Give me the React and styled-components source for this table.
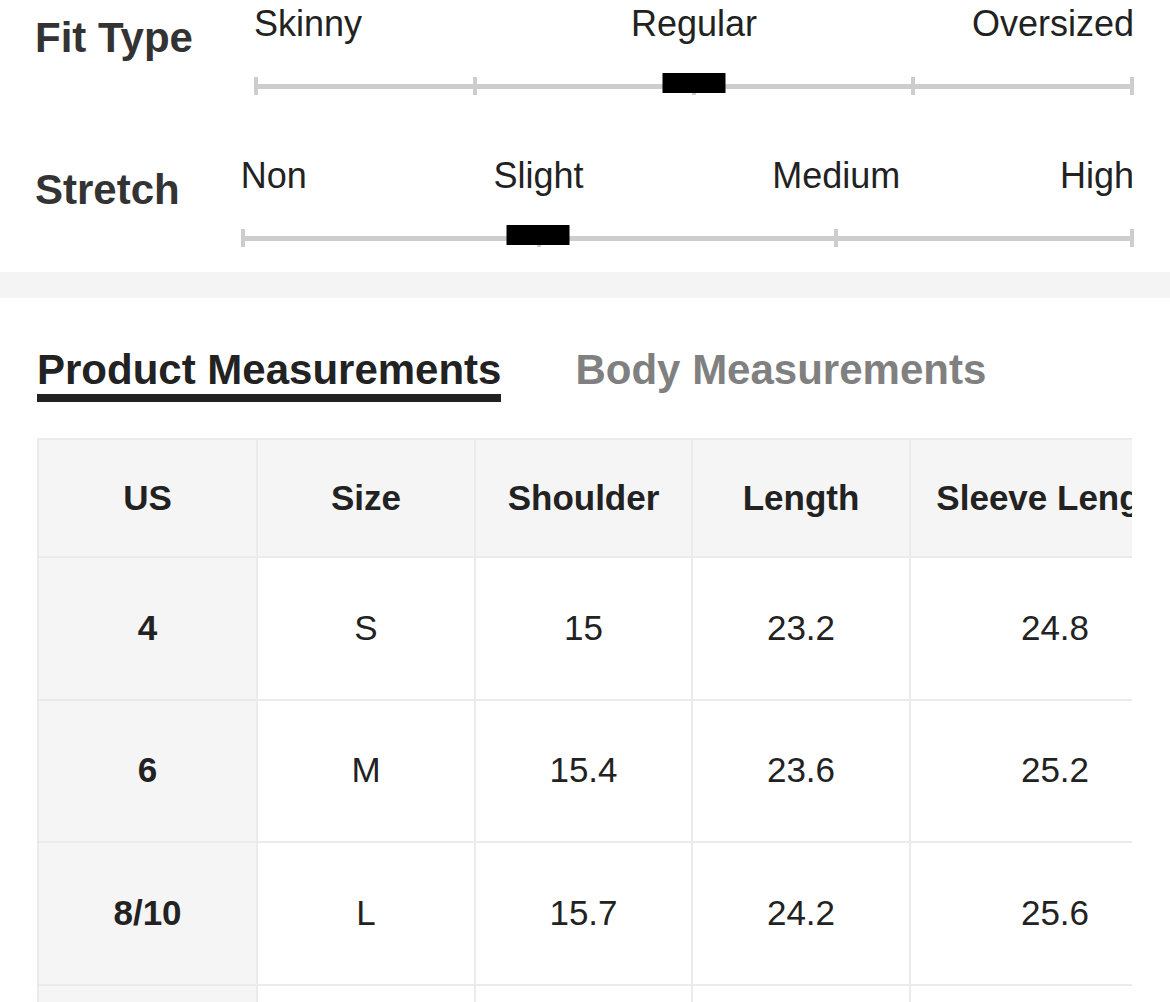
import React from 'react'
import styled, { createGlobalStyle } from 'styled-components'

const fitLabels = ['Skinny', 'Regular', 'Oversized']
const stretchLabels = ['Non', 'Slight', 'Medium', 'High']

const rows = [
  { us: '4', size: 'S', shoulder: '15', length: '23.2', sleeve: '24.8' },
  { us: '6', size: 'M', shoulder: '15.4', length: '23.6', sleeve: '25.2' },
  { us: '8/10', size: 'L', shoulder: '15.7', length: '24.2', sleeve: '25.6' },
  { us: '12', size: 'XL', shoulder: '16.1', length: '24.8', sleeve: '26' },
]

const GlobalStyle = createGlobalStyle`
  * { box-sizing: border-box; }
  body {
    margin: 0;
    background: #fff;
    font-family: "Liberation Sans", Arial, sans-serif;
    color: #222;
  }
`

const Scale = ({ labels, stops, value }) => {
  const cols = (labels.length - 1) * 2
  return (
    <ScaleBox>
      <Labels $cols={cols}>
        {labels.map((l, i) => (
          <Label key={l} $i={i} $last={i === labels.length - 1} $cols={cols}>
            {l}
          </Label>
        ))}
      </Labels>
      <Track>
        {Array.from({ length: stops }).map((_, i) => (
          <Tick key={i} />
        ))}
        <Thumb style={{ left: `${(value / (stops - 1)) * 100}%` }} />
      </Track>
    </ScaleBox>
  )
}

const App = () => {
  return (
    <>
      <GlobalStyle />
      <Fit>
        <Row>
          <RowLabel>Fit Type</RowLabel>
          <Scale labels={fitLabels} stops={5} value={2} />
        </Row>
        <Row>
          <RowLabel>Stretch</RowLabel>
          <Scale labels={stretchLabels} stops={4} value={1} />
        </Row>
      </Fit>
      <Band />
      <Measure>
        <Tabs>
          <Tab $active>Product Measurements</Tab>
          <Tab>Body Measurements</Tab>
        </Tabs>
        <TableWrap>
          <Table>
            <colgroup>
              <col style={{ width: 219 }} />
              <col style={{ width: 218 }} />
              <col style={{ width: 217 }} />
              <col style={{ width: 218 }} />
              <col style={{ width: 290 }} />
            </colgroup>
            <thead>
              <tr>
                <Th>US</Th>
                <Th>Size</Th>
                <Th>Shoulder</Th>
                <Th>Length</Th>
                <Th>Sleeve Length</Th>
              </tr>
            </thead>
            <tbody>
              {rows.map((r) => (
                <tr key={r.us}>
                  <Td $head>{r.us}</Td>
                  <Td>{r.size}</Td>
                  <Td>{r.shoulder}</Td>
                  <Td>{r.length}</Td>
                  <Td>{r.sleeve}</Td>
                </tr>
              ))}
            </tbody>
          </Table>
        </TableWrap>
      </Measure>
    </>
  )
}

const Fit = styled.section`
  padding: 3px 36px 25px 35px;
  display: flex;
  flex-direction: column;
  gap: 60px;
`

const Row = styled.div`
  display: flex;
  align-items: flex-start;
  gap: 61px;
`

const RowLabel = styled.h3`
  margin: 11px 0 0;
  font-size: 42px;
  line-height: 48px;
  font-weight: 700;
  color: #333;
  white-space: nowrap;
`

const ScaleBox = styled.div`
  flex: 1;
  min-width: 0;
`

const Labels = styled.div`
  display: grid;
  grid-template-columns: repeat(${(p) => p.$cols}, minmax(0, 1fr));
  font-size: 36px;
  line-height: 41px;
  color: #222;
  margin-bottom: 33px;
`

const Label = styled.span`
  white-space: nowrap;
  grid-row: 1;
  grid-column: ${(p) =>
    p.$i === 0 ? '1 / span 1' : p.$last ? `${p.$cols} / span 1` : `${p.$i * 2} / span 2`};
  justify-self: ${(p) => (p.$i === 0 ? 'start' : p.$last ? 'end' : 'center')};
`

const Track = styled.div`
  position: relative;
  height: 18px;
  display: flex;
  justify-content: space-between;
  background: linear-gradient(#cdcdcd, #cdcdcd) center / 100% 5px no-repeat;
`

const Tick = styled.span`
  width: 4px;
  height: 18px;
  background: #cdcdcd;
`

const Thumb = styled.span`
  position: absolute;
  top: -4px;
  width: 63px;
  height: 20px;
  background: #000;
  transform: translateX(-50%);
`

const Band = styled.div`
  height: 26px;
  background: #f4f4f4;
`

const Measure = styled.section`
  padding: 48px 38px 0 37px;
`

const Tabs = styled.div`
  display: flex;
  gap: 74px;
  margin-bottom: 36px;
`

const Tab = styled.div`
  font-size: 42px;
  line-height: 48px;
  font-weight: 700;
  white-space: nowrap;
  color: ${(p) => (p.$active ? '#222' : '#808080')};
  border-bottom: 8px solid ${(p) => (p.$active ? '#222' : 'transparent')};
`

const TableWrap = styled.div`
  overflow: hidden;
`

const Table = styled.table`
  table-layout: fixed;
  width: 1162px;
  border-collapse: collapse;
  font-size: 35px;
  color: #222;
`

const Th = styled.th`
  background: #f5f5f5;
  border: 2px solid #ebebeb;
  padding: 37px 22px 38px;
  line-height: 41px;
  font-weight: 700;
  text-align: center;
  white-space: nowrap;
`

const Td = styled.td`
  background: ${(p) => (p.$head ? '#f5f5f5' : '#fff')};
  border: 2px solid #ebebeb;
  padding: 49.75px 22px 50.75px;
  line-height: 40px;
  font-weight: ${(p) => (p.$head ? 700 : 400)};
  text-align: center;
  white-space: nowrap;
`

export default App
